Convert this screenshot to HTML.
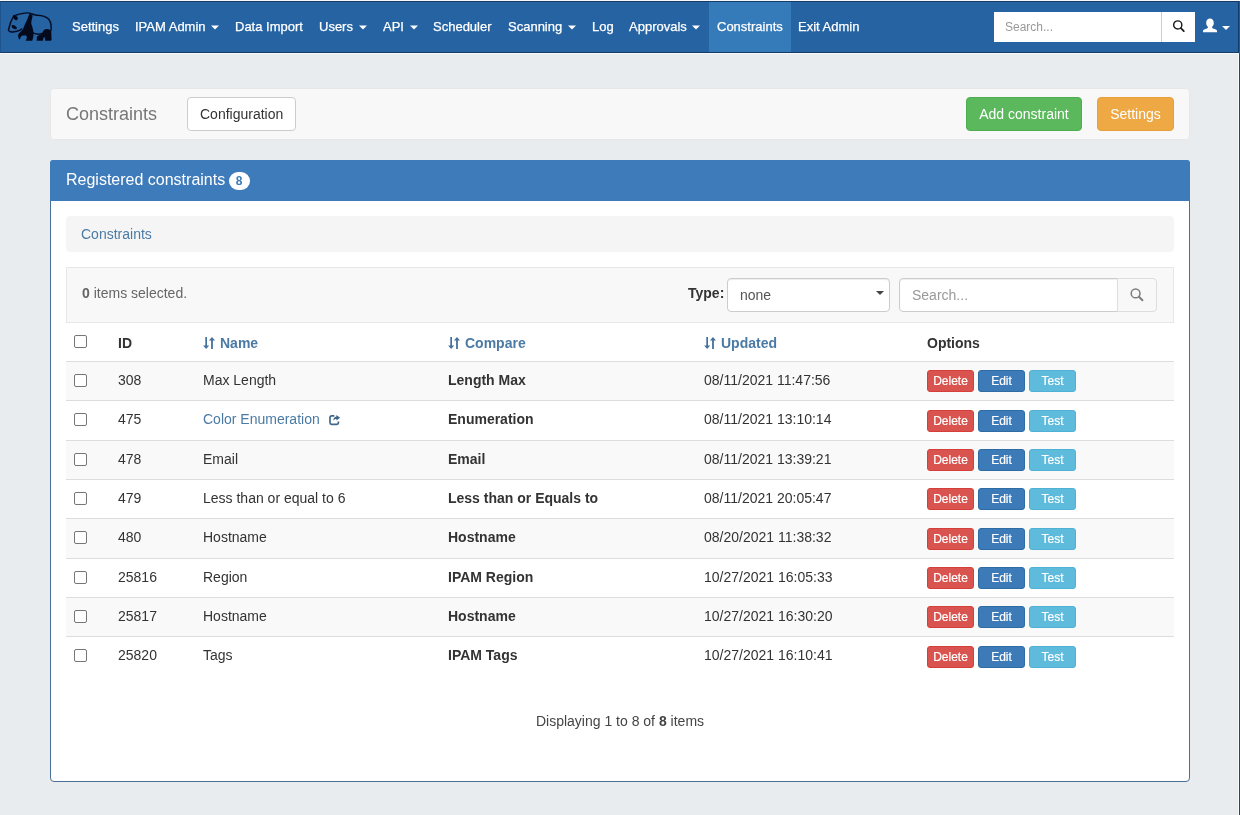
<!DOCTYPE html>
<html><head><meta charset="utf-8">
<style>
*{box-sizing:border-box}
html,body{margin:0;padding:0}
body{width:1240px;height:815px;overflow:hidden;background:#e9ecef;font-family:"Liberation Sans",sans-serif;font-size:14px;line-height:20px;color:#333;position:relative}
.nav{position:absolute;left:0;top:1px;width:1239px;height:52px;background:#2563a2;border:1px solid #163c66;border-left-color:#1d548e;box-shadow:0 1px 0 #f3f9fd}
.nav a{position:absolute;top:14px;transform:translateY(0.6px);color:#fff;font-size:13px;white-space:nowrap;line-height:20px;-webkit-text-stroke:0.25px #fff}
.caret{display:inline-block;width:0;height:0;margin-left:2px;vertical-align:middle;border-top:4px solid #fff;border-right:4px solid transparent;border-left:4px solid transparent}
.active{position:absolute;left:708px;top:0;width:82px;height:50px;background:#357ab9}
.hdr{position:absolute;left:50px;top:88px;width:1140px;height:52px;background:#f8f8f8;border:1px solid #e7e7e7;border-radius:4px}
.btn{position:absolute;border-radius:4px;border:1px solid transparent;text-align:center;font-size:14px;line-height:20px;padding:6px 12px;white-space:nowrap}
.panel{position:absolute;left:50px;top:160px;width:1140px;height:622px;background:#fff;border:1px solid #4a7097;border-radius:4px}
.phead{position:absolute;left:-1px;top:-1px;width:1140px;height:41px;background:#3e7bba;border-radius:3px 3px 0 0;color:#fff;font-size:16px;padding:10px 15px 10px 16px}
.badge{display:inline-block;min-width:21px;text-align:center;margin-left:-1px;padding:3px 7px;font-size:12px;line-height:1;color:#3e7bba;background:#fff;border-radius:10px;vertical-align:middle;font-weight:bold;position:relative;top:0px}
.bc{position:absolute;left:66px;top:216px;width:1108px;height:36px;background:#f5f5f5;border-radius:4px;padding:8px 15px;color:#4b7aa5}
.tb{position:absolute;left:66px;top:267px;width:1108px;height:56px;background:#f8f8f8;border:1px solid #e7e7e7}

.row{position:absolute;left:66px;width:1108px;border-top:1px solid #ddd}
.row.hd{border-top:none}
.row.odd{background:#f9f9f9}
.c{position:absolute;top:8px;white-space:nowrap;line-height:20px}
.row.hd .c{top:10px}
.b{font-weight:bold}
.c1{left:52px}.c2{left:137px}.c3{left:382px}.c4{left:638px}.c5{left:861px}
.row .cb{position:absolute;left:8px}
.row .sb{position:absolute;top:8px}
.row .sb.d{left:861px}.row .sb.e{left:912px}.row .sb.t{left:963px}
.cb{display:inline-block;width:13px;height:13px;border:1px solid #767676;border-radius:2px;background:#fff;vertical-align:middle}
.sb{-webkit-text-stroke:0.2px #fff;display:inline-block;width:47px;height:22px;text-align:center;font-size:12px;line-height:20px;padding:0;border-radius:3px;color:#fff;border:1px solid transparent;margin-right:0}
.lnk{color:#4b7aa5}
.logo{position:absolute;left:4px;top:8px}

.title{position:absolute;left:66px;top:102px;font-size:18px;line-height:24px;color:#777}
.sel{position:absolute;left:82px;top:283px;color:#666}
.typ{position:absolute;left:688px;top:283px;font-weight:bold;color:#333}
.select{position:absolute;left:727px;top:278px;width:163px;height:34px;background:#fff;border:1px solid #ccc;border-radius:4px;padding:6px 12px;font-size:14px;color:#555;box-shadow:inset 0 1px 1px rgba(0,0,0,.075)}
.caret2{position:absolute;right:5px;top:12px;width:0;height:0;border-top:4px solid #444;border-left:4px solid transparent;border-right:4px solid transparent}
.sinp{position:absolute;left:899px;top:278px;width:219px;height:34px;background:#fff;border:1px solid #ccc;border-radius:4px 0 0 4px;padding:6px 12px;font-size:14px;color:#999;box-shadow:inset 0 1px 1px rgba(0,0,0,.075)}
.sbtn{position:absolute;left:1117px;top:278px;width:40px;height:34px;background:#f8f8f8;border:1px solid #ddd;border-radius:0 4px 4px 0}
.sbtn svg{position:absolute;left:12px;top:9px}
.foot{position:absolute;left:0;width:1240px;top:711px;text-align:center;color:#444}
.nsearch{position:absolute;left:994px;top:12px;width:167px;height:30px;background:#fff;padding:6px 11px;font-size:12px;line-height:19px;color:#999}
.nsbtn{position:absolute;left:1161px;top:12px;width:34px;height:30px;background:#fff;border-left:1px solid #ccc}
.nsbtn svg{position:absolute;left:11px;top:9px}
.user{position:absolute;left:1202px;top:18px}
.srt{vertical-align:-1px;margin-right:5px}
.ext{vertical-align:-1px;margin-left:9px;transform:translateY(0.7px)}
.sb.d{background:#d9534f;border-color:#d43f3a}
.sb.e{background:#3d7ab8;border-color:#2e6da4}
.sb.t{background:#5ebbdc;border-color:#4fb1d6}
th{font-weight:bold}
svg{overflow:visible}
#wrap{position:absolute;left:0;top:0;width:1240px;height:815px;will-change:transform}
</style></head><body><div id="wrap">
<div style="position:absolute;left:0;top:0;width:1240px;height:1px;background:#f4f8fc"></div>
<div style="position:absolute;left:1239px;top:54px;width:1px;height:761px;background:#3b4350"></div>
<div style="position:absolute;left:1239px;top:1px;width:1px;height:53px;background:#27598f"></div>
<div style="position:absolute;left:1238px;top:54px;width:1px;height:761px;background:#f7f9fb"></div>
<div class="nav">
<div class="active"></div>
<a style="left:71px">Settings</a>
<a style="left:134px">IPAM Admin <span class="caret"></span></a>
<a style="left:234px">Data Import</a>
<a style="left:318px">Users <span class="caret"></span></a>
<a style="left:382px">API <span class="caret"></span></a>
<a style="left:432px">Scheduler</a>
<a style="left:507px">Scanning <span class="caret"></span></a>
<a style="left:591px">Log</a>
<a style="left:628px">Approvals <span class="caret"></span></a>
<a style="left:716px">Constraints</a>
<a style="left:797px">Exit Admin</a>
</div>
<svg class="logo" width="54" height="38" viewBox="0 0 115.8 81.5">
<g fill="none" stroke="#040d24" stroke-width="3.1" stroke-linecap="round" stroke-linejoin="round">
<path d="M21 17C30 14 40 10.5 50 10.5C58 10.5 62 15 70 15.5C80 16 88 16 96 24C102 31 102 44 100 50"/>
<path d="M21 17C14 28 11 40 9.5 47C10 51 17 52 22 51C28 50 34 49 38 45"/>
<path d="M60 52C68 57 76 57 83 54"/>
</g>
<g fill="#040a1c">
<path d="M19.8 16.6C23 14.2 27.4 17 29.3 20.6C30.2 24.6 28 27.4 24.8 26C21.8 24.4 18.8 21 19.8 16.6Z"/>
<path d="M16.8 37.3C20 35 26.5 39 27.8 43C27.5 46.6 22 45.8 19.3 43.6C17.2 42 15.8 39.3 16.8 37.3Z"/>
<path d="M55 12L61.5 16C60 24 58 30 58.5 34C62 44 65 54 62.5 64L60.5 70H46.5L49 64.5L48 59H41C37 59.5 35 62 34 68C31 66 29.5 61 30.5 57C33 52 38 49 40.5 46C43 40 45 34 48.5 28C51 22 53 17 55 12Z"/>
<path d="M82.5 54C83.5 48.5 87.5 45.3 92 45.3C97 45.3 101 48 101.5 53.5L102 68.5L100 70.5H88.5L87.5 63L84.5 64L83.5 70.5H70L71 61C73 58.5 78 57.5 82.5 54Z"/>
</g></svg>
<div class="hdr"></div>
<div class="panel"><div class="phead">Registered constraints <span class="badge">8</span></div></div>
<div class="bc">Constraints</div>
<div class="tb"></div>
<div class="row hd" style="top:323px;height:38px"><span class="cb" style="top:12px"></span><span class="c c1 b">ID</span><span class="c c2 b lnk"><svg class="srt" width="12" height="12" viewBox="0 0 12 12"><path d="M2.3 0H4V8.6H6.2L3.15 12L0.1 8.6H2.3ZM8.1 12H9.9V3.4H12L8.95 0L5.9 3.4H8.1Z" fill="#44719d"/></svg>Name</span><span class="c c3 b lnk"><svg class="srt" width="12" height="12" viewBox="0 0 12 12"><path d="M2.3 0H4V8.6H6.2L3.15 12L0.1 8.6H2.3ZM8.1 12H9.9V3.4H12L8.95 0L5.9 3.4H8.1Z" fill="#44719d"/></svg>Compare</span><span class="c c4 b lnk"><svg class="srt" width="12" height="12" viewBox="0 0 12 12"><path d="M2.3 0H4V8.6H6.2L3.15 12L0.1 8.6H2.3ZM8.1 12H9.9V3.4H12L8.95 0L5.9 3.4H8.1Z" fill="#44719d"/></svg>Updated</span><span class="c c5 b">Options</span></div>
<div class="row odd" style="top:361px;height:39px"><span class="cb" style="top:12px"></span><span class="c c1">308</span><span class="c c2">Max Length</span><span class="c c3 b">Length Max</span><span class="c c4">08/11/2021 11:47:56</span><span class="sb d">Delete</span><span class="sb e">Edit</span><span class="sb t">Test</span></div>
<div class="row" style="top:400px;height:40px"><span class="cb" style="top:12px"></span><span class="c c1">475</span><span class="c c2"><span class="lnk">Color Enumeration</span><svg class="ext" width="12" height="11" viewBox="0 0 12 11"><path d="M5.4 1.2H2.6C1.7 1.2 1 1.9 1 2.8V8C1 8.9 1.7 9.6 2.6 9.6H7.8C8.7 9.6 9.4 8.9 9.4 8V6.8" fill="none" stroke="#3f678d" stroke-width="1.7"/><path d="M7.4 0.2L11.1 3L7.4 5.8V4.3C6 4.3 5 4.8 4.2 5.9C4.4 3.6 5.5 2.2 7.4 1.9Z" fill="#3f678d"/></svg></span><span class="c c3 b">Enumeration</span><span class="c c4">08/11/2021 13:10:14</span><span class="sb d" style="top:9px">Delete</span><span class="sb e" style="top:9px">Edit</span><span class="sb t" style="top:9px">Test</span></div>
<div class="row odd" style="top:440px;height:39px"><span class="cb" style="top:12px"></span><span class="c c1">478</span><span class="c c2">Email</span><span class="c c3 b">Email</span><span class="c c4">08/11/2021 13:39:21</span><span class="sb d">Delete</span><span class="sb e">Edit</span><span class="sb t">Test</span></div>
<div class="row" style="top:479px;height:39px"><span class="cb" style="top:12px"></span><span class="c c1">479</span><span class="c c2">Less than or equal to 6</span><span class="c c3 b">Less than or Equals to</span><span class="c c4">08/11/2021 20:05:47</span><span class="sb d">Delete</span><span class="sb e">Edit</span><span class="sb t">Test</span></div>
<div class="row odd" style="top:518px;height:40px"><span class="cb" style="top:12px"></span><span class="c c1">480</span><span class="c c2">Hostname</span><span class="c c3 b">Hostname</span><span class="c c4">08/20/2021 11:38:32</span><span class="sb d" style="top:9px">Delete</span><span class="sb e" style="top:9px">Edit</span><span class="sb t" style="top:9px">Test</span></div>
<div class="row" style="top:558px;height:39px"><span class="cb" style="top:12px"></span><span class="c c1">25816</span><span class="c c2">Region</span><span class="c c3 b">IPAM Region</span><span class="c c4">10/27/2021 16:05:33</span><span class="sb d">Delete</span><span class="sb e">Edit</span><span class="sb t">Test</span></div>
<div class="row odd" style="top:597px;height:39px"><span class="cb" style="top:12px"></span><span class="c c1">25817</span><span class="c c2">Hostname</span><span class="c c3 b">Hostname</span><span class="c c4">10/27/2021 16:30:20</span><span class="sb d">Delete</span><span class="sb e">Edit</span><span class="sb t">Test</span></div>
<div class="row" style="top:636px;height:39px"><span class="cb" style="top:12px"></span><span class="c c1">25820</span><span class="c c2">Tags</span><span class="c c3 b">IPAM Tags</span><span class="c c4">10/27/2021 16:10:41</span><span class="sb d" style="top:9px">Delete</span><span class="sb e" style="top:9px">Edit</span><span class="sb t" style="top:9px">Test</span></div>

<div class="title">Constraints</div>
<div class="btn" style="left:187px;top:97px;width:109px;background:#fff;border-color:#ccc;color:#333">Configuration</div>
<div class="btn" style="left:966px;top:97px;width:116px;background:#5cb85c;border-color:#4cae4c;color:#fff">Add constraint</div>
<div class="btn" style="left:1097px;top:97px;width:77px;background:#eea944;border-color:#e89f3a;color:#fff">Settings</div>
<div class="sel"><b>0</b> items selected.</div>
<div class="typ">Type:</div>
<div class="select">none<span class="caret2"></span></div>
<div class="sinp">Search...</div>
<div class="sbtn"><svg width="14" height="14" viewBox="0 0 14 14"><circle cx="5.6" cy="5.4" r="4.4" fill="none" stroke="#7d7d7d" stroke-width="1.5"/><path d="M8.9 8.7L12.4 12.2" stroke="#7d7d7d" stroke-width="2" stroke-linecap="round"/></svg></div>
<div class="foot">Displaying 1 to 8 of <b>8</b> items</div>
<div class="nsearch">Search...</div>
<div class="nsbtn"><svg width="13" height="12" viewBox="0 0 13 12"><circle cx="4.75" cy="3.95" r="4.1" fill="none" stroke="#1c1c1c" stroke-width="1.45"/><path d="M7.9 7.2L10.8 10.1" stroke="#1c1c1c" stroke-width="1.8" stroke-linecap="round"/></svg></div>
<svg class="user" width="16" height="15" viewBox="0 0 16 15"><path d="M8 0.6C10.3 0.6 11.8 2.4 11.8 4.9C11.8 6.6 11 8.1 10 8.8C10.1 9.9 10.6 10.5 11.6 10.8C13.2 11.3 14.6 11.6 15 12.6V14.2H1V12.6C1.4 11.6 2.8 11.3 4.4 10.8C5.4 10.5 5.9 9.9 6 8.8C5 8.1 4.2 6.6 4.2 4.9C4.2 2.4 5.7 0.6 8 0.6Z" fill="#fff"/></svg>
<span class="caret" style="position:absolute;left:1220px;top:26px"></span>

</div></body></html>
